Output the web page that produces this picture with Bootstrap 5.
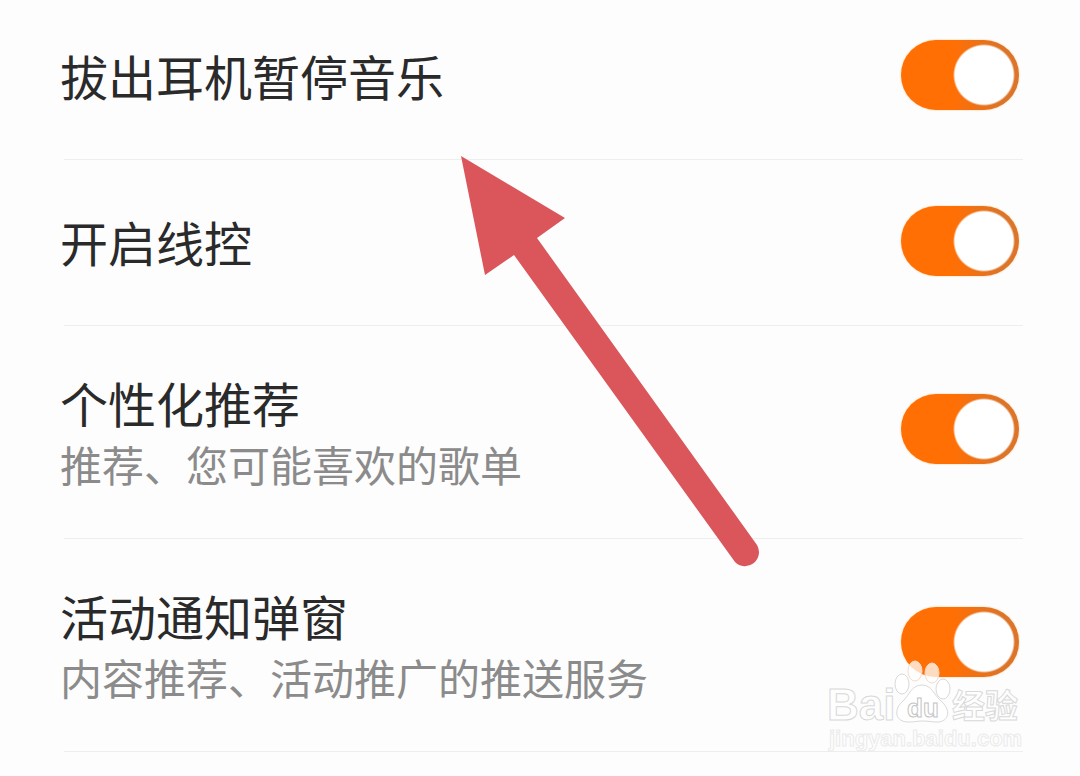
<!DOCTYPE html>
<html lang="zh-CN">
<head>
<meta charset="utf-8">
<meta name="viewport" content="width=device-width, initial-scale=1">
<title>设置</title>
<link href="https://cdn.jsdelivr.net/npm/bootstrap@5.3.0/dist/css/bootstrap.min.css" rel="stylesheet">
<script src="https://cdn.jsdelivr.net/npm/bootstrap@5.3.0/dist/js/bootstrap.bundle.min.js"></script>
<style>
  body { background: #fdfdfd; font-family: "Noto Sans CJK SC", sans-serif; color: #2a2a2a; overflow-x: hidden; }
  .settings { padding: 0 57px 24px 60px; }
  .setting { padding: 46px 0 49px; }
  .setting.first-setting { padding-top: 40px; }
  .setting-title { font-size: 48px; line-height: 70px; }
  .setting-note { font-size: 42px; line-height: 54px; color: #8b8b8b; }
  .setting.with-note { padding: 41px 0 47px; }
  .divider { border-top: 1px solid #eee; opacity: 1; }
  .form-check-input.toggle-big, .form-check-input.toggle-big:focus {
    width: 118px; height: 70px; margin: 0; border: 0; border-radius: 35px; box-shadow: 0 0 2px #ffc98f;
    background-color: #ff6f04;
    background-image: radial-gradient(circle at 83px 35px, #fff 29px, transparent 31px), linear-gradient(90deg, #ff6f04 45%, #dc7429 85%);
    background-size: 100% 100%; background-position: 0 0;
  }
  .pointer-arrow { left: 461px; top: 156px; }
  .watermark { right: 54px; top: 658px; }
  .pointer-arrow, .watermark { pointer-events: none; }
</style>
</head>
<body>
<main class="settings position-relative">
  <div class="setting first-setting d-flex justify-content-between align-items-start">
    <label class="setting-title" for="unplug">拔出耳机暂停音乐</label>
    <div class="form-switch p-0 me-1 d-flex"><input class="form-check-input toggle-big" type="checkbox" role="switch" id="unplug" checked></div>
  </div>
  <hr class="divider my-0 ms-1">
  <div class="setting d-flex justify-content-between align-items-start">
    <label class="setting-title" for="wire">开启线控</label>
    <div class="form-switch p-0 me-1 d-flex"><input class="form-check-input toggle-big" type="checkbox" role="switch" id="wire" checked></div>
  </div>
  <hr class="divider my-0 ms-1">
  <div class="setting with-note d-flex justify-content-between align-items-center">
    <label for="personal"><span class="setting-title d-block">个性化推荐</span><span class="setting-note d-block">推荐、您可能喜欢的歌单</span></label>
    <div class="form-switch p-0 me-1 d-flex"><input class="form-check-input toggle-big" type="checkbox" role="switch" id="personal" checked></div>
  </div>
  <hr class="divider my-0 ms-1">
  <div class="setting with-note d-flex justify-content-between align-items-center">
    <label for="popup"><span class="setting-title d-block">活动通知弹窗</span><span class="setting-note d-block">内容推荐、活动推广的推送服务</span></label>
    <div class="form-switch p-0 me-1 d-flex"><input class="form-check-input toggle-big" type="checkbox" role="switch" id="popup" checked></div>
  </div>
  <hr class="divider my-0 ms-1">

  <svg class="pointer-arrow position-absolute" width="302" height="414" viewBox="0 0 302 414" aria-hidden="true">
    <path fill="#da565b" d="M0 0 104 62 76 82 296 389A14 14 0 0 1 274 406L53 99 24 119Z"/>
  </svg>

  <svg class="watermark position-absolute" width="200" height="98" viewBox="0 0 200 98" aria-hidden="true">
    <g fill="#fff" fill-opacity=".75" stroke="#d9d9d9" stroke-width="1">
      <ellipse cx="76" cy="26" rx="7" ry="10"/>
      <ellipse cx="89" cy="13" rx="7" ry="10" stroke="#f5dccb"/>
      <ellipse cx="106" cy="15" rx="7" ry="10" stroke="#f5dccb"/>
      <ellipse cx="117" cy="31" rx="7" ry="10"/>
      <path d="M96 27C86 27 83 37 78 42C66 52 70 64 82 64C89 64 91 63 97 63C103 63 105 64 111 64C123 64 126 52 114 42C108 37 106 27 96 27Z"/>
      <g font-family="Liberation Sans, sans-serif" font-weight="700">
        <text x="1" y="62" font-size="44">Bai</text>
        <text x="81" y="59" font-size="26" font-weight="700" stroke="#c4c4c4">du</text>
        <text x="3" y="88" font-size="22" stroke="#ebebeb">jingyan.baidu.com</text>
      </g>
      <text x="126" y="60" font-size="33" font-weight="700" font-family="Noto Sans CJK SC, sans-serif">经验</text>
    </g>
  </svg>
</main>
</body>
</html>
